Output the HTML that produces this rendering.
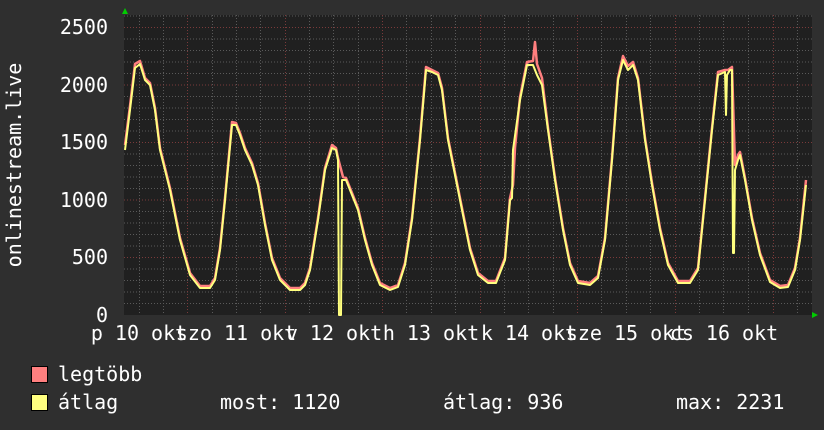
<!DOCTYPE html>
<html><head><meta charset="utf-8"><style>
html,body{margin:0;padding:0;background:#2f2f2f;}
svg{display:block}
text{font-family:"DejaVu Sans Mono","Liberation Mono",monospace;fill:#fff;font-size:20px}
</style></head><body>
<svg width="824" height="430" viewBox="0 0 824 430" xmlns="http://www.w3.org/2000/svg">
<rect width="824" height="430" fill="#2f2f2f"/>
<rect x="124" y="15" width="688" height="300" fill="#202020"/>
<g stroke="#5a5a5a" stroke-width="1" stroke-dasharray="1,2">
<path d="M124 303.5H812M124 292H812M124 280.5H812M124 269H812M124 246H812M124 234.5H812M124 223H812M124 211.5H812M124 188.5H812M124 177H812M124 165.5H812M124 154H812M124 131H812M124 119.5H812M124 108H812M124 96.5H812M124 73.5H812M124 62H812M124 50.5H812M124 39H812M124 16H812"/>
<path d="M139.5 15V315M163.5 15V315M212.5 15V315M236.5 15V315M260.5 15V315M309.5 15V315M333.5 15V315M358.5 15V315M406.5 15V315M431.5 15V315M455.5 15V315M504.5 15V315M528.5 15V315M553.5 15V315M601.5 15V315M626.5 15V315M650.5 15V315M699.5 15V315M723.5 15V315M748.5 15V315M797.5 15V315"/>
</g>
<g stroke="#7a3a3a" stroke-width="1" stroke-dasharray="1,2">
<path d="M124 27.5H812M124 85H812M124 142.5H812M124 200H812M124 257.5H812"/>
<path d="M187.5 15V315M285.5 15V315M382.5 15V315M480.5 15V315M577.5 15V315M675.5 15V315M773.5 15V315"/>
</g>
<polyline fill="none" stroke="#ff7f7f" stroke-width="2.5" stroke-linejoin="round" points="125,145 130,106 135,64 140,61 145,78 150,83 155,108 160,148 170,188 180,238 190,273 200,286 210,286 215,278 220,248 225,198 232,122 236,123 240,133 245,148 252,163 258,183 265,223 272,258 280,278 290,288 300,288 305,283 310,268 318,218 325,168 332,145 336,148 338,158 343,177 346,178 352,193 358,208 365,238 372,263 380,283 390,288 398,285 405,263 412,218 420,138 426,67 432,70 438,73 442,88 448,138 455,173 462,208 470,248 478,273 488,281 496,281 505,258 510,198 513,185 515,148 520,97 527,62 533,61 535,42 537,64 542,78 548,128 555,178 563,228 570,263 578,281 590,283 598,276 605,238 612,158 618,78 623,56 628,66 633,62 638,78 645,138 652,183 660,228 668,263 678,281 690,281 698,268 705,198 712,128 718,72 725,70 728,70 732,67 735,165 738,155 740,152 745,178 752,218 760,253 770,280 780,286 788,285 795,268 800,238 806,180"/>
<polyline fill="none" stroke="#ffff7f" stroke-width="2" stroke-linejoin="round" points="125,150 130,110 135,68 140,64 145,80 150,85 155,110 160,150 170,190 180,240 190,275 200,288 210,288 215,280 220,250 225,200 232,125 236,125 240,135 245,150 252,165 258,185 265,225 272,260 280,280 290,290 300,290 305,285 310,270 318,220 325,170 332,148 336,150 338,160 339,315 341,315 342,180 346,180 352,195 358,210 365,240 372,265 380,285 390,290 398,287 405,265 412,220 420,140 426,70 432,72 438,75 442,90 448,140 455,175 462,210 470,250 478,275 488,283 496,283 505,260 510,200 512,198 513,150 520,100 527,65 533,65 537,75 542,85 548,130 555,180 563,230 570,265 578,283 590,285 598,278 605,240 612,160 618,80 623,60 628,70 633,65 638,80 645,140 652,185 660,230 668,265 678,283 690,283 698,270 705,200 712,130 718,75 725,72 726,115 727,75 730,70 732,70 733,253 734,253 735,170 738,160 740,155 745,180 752,220 760,255 770,282 780,288 788,287 795,270 800,240 806,185"/>
<polygon points="122,14 125,8 128,14" fill="#00cc00"/>
<polygon points="812,312 818,315 812,318" fill="#00cc00"/>
<g text-anchor="end">
<text x="108" y="34">2500</text><text x="108" y="92">2000</text><text x="108" y="149">1500</text><text x="108" y="207">1000</text><text x="108" y="264">500</text><text x="108" y="322">0</text>
</g>
<text transform="translate(21,165) rotate(-90)" text-anchor="middle">onlinestream.live</text>
<g text-anchor="middle">
<text x="139" y="340">p 10 okt</text>
<text x="236" y="340">szo 11 okt</text>
<text x="334" y="340">v 12 okt</text>
<text x="431" y="340">h 13 okt</text>
<text x="529" y="340">k 14 okt</text>
<text x="626" y="340">sze 15 okt</text>
<text x="724" y="340">cs 16 okt</text>
</g>
<rect x="31.5" y="366.5" width="16" height="16" fill="#ff7f7f" stroke="#000"/>
<rect x="31.5" y="394.5" width="16" height="16" fill="#ffff7f" stroke="#000"/>
<text x="58" y="381">legtöbb</text>
<text x="58" y="409">átlag</text>
<text x="220" y="409">most: 1120</text>
<text x="443" y="409">átlag: 936</text>
<text x="676" y="409">max: 2231</text>
</svg>
</body></html>
